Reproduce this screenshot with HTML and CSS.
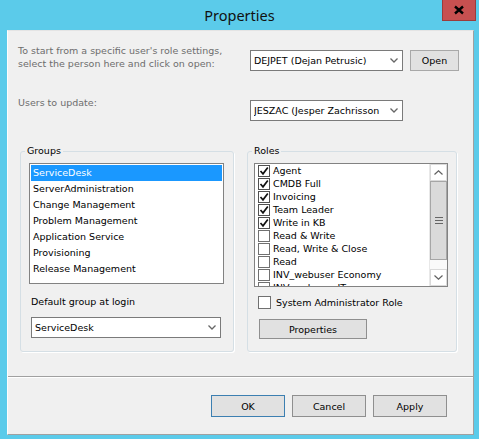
FILE: index.html
```html
<!DOCTYPE html>
<html>
<head>
<meta charset="utf-8">
<link rel="stylesheet" href="styles.css">
</head>
<body>
<div class="window">
  <div class="titlebar">
    <span></span>
    <span class="title">Properties</span>
    <div class="close"><svg width="12" height="10" viewBox="0 0 12 10"><path d="M2 1.5 L10 8.5 M10 1.5 L2 8.5" stroke="#000" stroke-width="2.4" fill="none"/></svg></div>
  </div>
  <div class="client">
    <div class="toprow r1">
      <p class="hint">To start from a specific user's role settings,<br>select the person here and click on open:</p>
      <div class="combo c-user m6"><span>DEJPET (Dejan Petrusic)</span><svg class="chev" width="8" height="5" viewBox="0 0 8 5"><path d="M0.5 0.5 L4 4 L7.5 0.5" stroke="#666" stroke-width="1.3" fill="none"/></svg></div>
      <div class="btn open m6">Open</div>
    </div>
    <div class="toprow r2">
      <p class="hint">Users to update:</p>
      <div class="combo c-user m4"><span>JESZAC (Jesper Zachrisson</span><svg class="chev" width="8" height="5" viewBox="0 0 8 5"><path d="M0.5 0.5 L4 4 L7.5 0.5" stroke="#666" stroke-width="1.3" fill="none"/></svg></div>
    </div>
    <div class="boxes">
      <div class="groupbox groups">
        <div class="gtitle">Groups</div>
        <ul class="listbox">
          <li class="sel">ServiceDesk</li>
          <li>ServerAdministration</li>
          <li>Change Management</li>
          <li>Problem Management</li>
          <li>Application Service</li>
          <li>Provisioning</li>
          <li>Release Management</li>
        </ul>
        <div class="deflabel">Default group at login</div>
        <div class="combo c-group"><span>ServiceDesk</span><svg class="chev" width="8" height="5" viewBox="0 0 8 5"><path d="M0.5 0.5 L4 4 L7.5 0.5" stroke="#666" stroke-width="1.3" fill="none"/></svg></div>
      </div>
      <div class="groupbox roles">
        <div class="gtitle">Roles</div>
        <div class="checklist">
          <ul class="items">
            <li><span class="cb on"><svg width="10" height="10" viewBox="0 0 10 10"><path d="M1.5 5 L4 7.8 L8.8 1.5" stroke="#111" stroke-width="1.7" fill="none"/></svg></span>Agent</li>
            <li><span class="cb on"><svg width="10" height="10" viewBox="0 0 10 10"><path d="M1.5 5 L4 7.8 L8.8 1.5" stroke="#111" stroke-width="1.7" fill="none"/></svg></span>CMDB Full</li>
            <li><span class="cb on"><svg width="10" height="10" viewBox="0 0 10 10"><path d="M1.5 5 L4 7.8 L8.8 1.5" stroke="#111" stroke-width="1.7" fill="none"/></svg></span>Invoicing</li>
            <li><span class="cb on"><svg width="10" height="10" viewBox="0 0 10 10"><path d="M1.5 5 L4 7.8 L8.8 1.5" stroke="#111" stroke-width="1.7" fill="none"/></svg></span>Team Leader</li>
            <li><span class="cb on"><svg width="10" height="10" viewBox="0 0 10 10"><path d="M1.5 5 L4 7.8 L8.8 1.5" stroke="#111" stroke-width="1.7" fill="none"/></svg></span>Write in KB</li>
            <li><span class="cb"></span>Read &amp; Write</li>
            <li><span class="cb"></span>Read, Write &amp; Close</li>
            <li><span class="cb"></span>Read</li>
            <li><span class="cb"></span>INV_webuser Economy</li>
            <li><span class="cb"></span>INV_webuser IT</li>
          </ul>
          <div class="scrollbar">
            <div class="sbtn"><svg width="9" height="5" viewBox="0 0 9 5"><path d="M0.5 4.5 L4.5 0.8 L8.5 4.5" stroke="#606060" stroke-width="1.2" fill="none"/></svg></div>
            <div class="thumb"><span class="grip"></span></div>
            <div class="track"></div>
            <div class="sbtn"><svg width="9" height="5" viewBox="0 0 9 5"><path d="M0.5 0.5 L4.5 4.2 L8.5 0.5" stroke="#606060" stroke-width="1.2" fill="none"/></svg></div>
          </div>
        </div>
        <div class="sysadmin"><span class="cb big"></span>System Administrator Role</div>
        <div class="btn props">Properties</div>
      </div>
    </div>
    <div class="sep"></div>
    <div class="footer">
      <div class="btn dlg ok">OK</div>
      <div class="btn dlg">Cancel</div>
      <div class="btn dlg">Apply</div>
    </div>
  </div>
</div>
</body>
</html>
```

FILE: styles.css
```css
html, body {
  margin: 0;
  padding: 0;
}
body {
  background: #5bcbea;
  width: 479px;
  height: 439px;
  overflow: hidden;
  font-family: "DejaVu Sans", "Liberation Sans", sans-serif;
  font-size: 9.5px;
  color: #000;
}
.window {
  width: 479px;
  height: 439px;
}
.titlebar {
  height: 30px;
  display: grid;
  grid-template-columns: 1fr auto 1fr;
  align-items: start;
}
.title {
  font-family: "Noto Sans", "Open Sans", sans-serif;
  font-size: 14.5px;
  line-height: 30px;
  color: #111;
}
.close {
  justify-self: end;
  margin-right: 3px;
  width: 34px;
  height: 21px;
  box-sizing: border-box;
  background: #c75050;
  border: 1px solid #9c3b3b;
  border-top: none;
  display: flex;
  align-items: center;
  justify-content: center;
}
.client {
  margin-left: 7px;
  width: 467px;
  height: 405px;
  box-sizing: border-box;
  background: #f0f0f0;
  border-left: 1px solid #fdfdfd;
  border-top: 1px solid #e4e4e4;
  border-right: 1px solid #a0a0a0;
  border-bottom: 1px solid #a0a0a0;
  display: flex;
  flex-direction: column;
}
.toprow {
  display: grid;
  grid-template-columns: 225px 153px 49px;
  column-gap: 7px;
  align-items: start;
  padding-left: 10px;
}
.r1 { margin-top: 13px; }
.r2 { margin-top: 25px; }
.hint {
  margin: 0;
  color: #6d6d6d;
  line-height: 13px;
  white-space: nowrap;
}
.m6 { margin-top: 6px; }
.m4 { margin-top: 4px; }
.combo {
  height: 21px;
  box-sizing: border-box;
  background: #fff;
  border: 1px solid #7a7a7a;
  display: flex;
  align-items: center;
  padding: 0 4px 0 3px;
  overflow: hidden;
}
.combo span {
  flex: 1;
  white-space: nowrap;
  overflow: hidden;
}
.chev {
  flex: none;
  margin-left: 2px;
}
.btn {
  box-sizing: border-box;
  background: #e1e1e1;
  border: 1px solid #8f8f8f;
  display: flex;
  align-items: center;
  justify-content: center;
}
.open {
  height: 21px;
  border-color: #a8a8a8;
}
.boxes {
  margin-top: 30px;
  padding-left: 12px;
  display: flex;
  gap: 13px;
}
.groupbox {
  height: 201px;
  box-sizing: border-box;
  border: 1px solid #d5dfe5;
  border-radius: 3px;
  box-shadow: 1px 1px 0 #fff;
}
.groups { width: 214px; }
.roles { width: 210px; }
.gtitle {
  width: fit-content;
  margin: -8px 0 0 4px;
  padding: 0 2px;
  line-height: 14px;
  background: #f0f0f0;
}
.listbox {
  list-style: none;
  margin: 5px 0 0 8px;
  padding: 1px;
  width: 195px;
  height: 121px;
  box-sizing: border-box;
  background: #fff;
  border: 1px solid #828282;
}
.listbox li {
  height: 16px;
  line-height: 16px;
  padding-left: 2px;
  white-space: nowrap;
}
.listbox li.sel {
  background: #1a98ff;
  color: #fff;
}
.deflabel {
  margin: 11px 0 0 10px;
  line-height: 13px;
}
.c-group {
  width: 190px;
  margin: 9px 0 0 10px;
}
.checklist {
  margin: 5px 0 0 6px;
  width: 194px;
  height: 124px;
  box-sizing: border-box;
  background: #fff;
  border: 1px solid #828282;
  display: flex;
  overflow: hidden;
}
.items {
  list-style: none;
  margin: 0;
  padding: 0 0 0 3px;
  flex: 1;
  overflow: hidden;
}
.items li {
  height: 13px;
  display: flex;
  align-items: center;
  white-space: nowrap;
}
.cb {
  flex: none;
  width: 12px;
  height: 12px;
  box-sizing: border-box;
  border: 1px solid #707070;
  background: #fff;
  margin-right: 3px;
  display: flex;
  align-items: center;
  justify-content: center;
}
.cb.on {
  border-color: #505050;
}
.cb.big {
  width: 13px;
  height: 13px;
  margin-right: 5px;
}
.scrollbar {
  flex: none;
  width: 17px;
  display: flex;
  flex-direction: column;
  background: #fafafa;
  border-left: 1px solid #e8e8e8;
}
.sbtn {
  height: 17px;
  box-sizing: border-box;
  border: 1px solid #dadada;
  background: #fff;
  display: flex;
  align-items: center;
  justify-content: center;
}
.thumb {
  height: 79px;
  box-sizing: border-box;
  background: #dadada;
  border: 1px solid #a6a6a6;
  display: flex;
  align-items: center;
  justify-content: center;
}
.grip {
  width: 8px;
  height: 7px;
  background: repeating-linear-gradient(#666 0 1px, transparent 1px 3px);
  background-size: 8px 7px;
}
.track {
  height: 9px;
}
.sysadmin {
  margin: 9px 0 0 10px;
  display: flex;
  align-items: center;
  line-height: 13px;
}
.props {
  width: 108px;
  height: 20px;
  margin: 10px 0 0 11px;
}
.sep {
  margin-top: 24px;
  height: 1px;
  background: #a0a0a0;
  border-bottom: 1px solid #fff;
}
.footer {
  margin-top: 17px;
  padding-right: 26px;
  display: flex;
  justify-content: flex-end;
  gap: 7px;
}
.dlg {
  width: 74px;
  height: 22px;
}
.ok {
  border-color: #3c7fb1;
}
```
